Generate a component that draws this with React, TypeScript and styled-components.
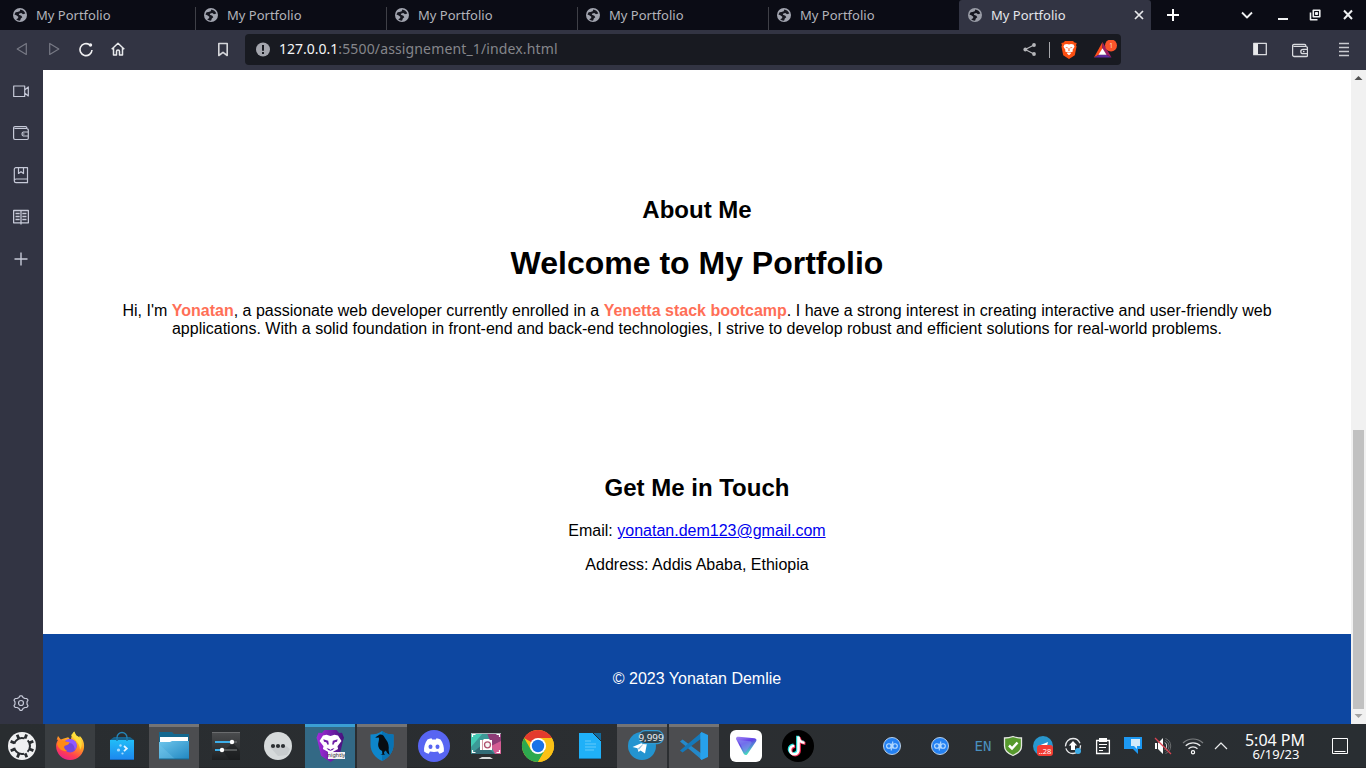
import React from "react";
import styled, { createGlobalStyle } from "styled-components";

const GlobalStyle = createGlobalStyle`
  * { box-sizing: border-box; }
  html, body { margin: 0; padding: 0; overflow: hidden; }
  svg { display: block; flex: none; }
`;

const ui = `"Noto Sans", sans-serif`;

const Screen = styled.div`
  width: 1366px;
  height: 768px;
  display: flex;
  flex-direction: column;
  overflow: hidden;
  font-family: ${ui};
`;

/* ---------- tab strip ---------- */
const TabStrip = styled.div`
  height: 30px;
  flex: none;
  display: flex;
  padding-left: 4px;
  background: #0b0c15;
`;
const Tab = styled.div<{ $active?: boolean; $divider?: boolean }>`
  width: ${(p) => (p.$active ? 192 : 191)}px;
  height: 30px;
  display: flex;
  align-items: center;
  padding: 0 5px 0 8px;
  font-size: 13px;
  color: ${(p) => (p.$active ? "#e4e5ea" : "#b3b4bb")};
  background: ${(p) =>
    p.$active
      ? "#323443"
      : p.$divider
        ? "linear-gradient(#3f4047, #3f4047) left bottom / 1px 23px no-repeat"
        : "none"};
  border-radius: ${(p) => (p.$active ? "3px 3px 0 0" : "0")};
`;
const TabTitle = styled.span`
  flex: 1;
  margin-left: 8px;
  line-height: 18px;
`;
const WindowButtons = styled.div`
  flex: 1;
  display: flex;
  justify-content: space-between;
  align-items: center;
  padding: 0 10px 0 14px;
`;
const ButtonGroup = styled.div`
  display: flex;
  align-items: center;
  gap: 18px;
`;

/* ---------- toolbar ---------- */
const Toolbar = styled.div`
  height: 40px;
  flex: none;
  display: flex;
  align-items: center;
  background: #323443;
  padding: 0 14px;
`;
const NavButtons = styled.div`
  display: flex;
  gap: 16px;
  width: 201px;
  padding-bottom: 2px;
`;
const AddressBar = styled.div`
  width: 876px;
  height: 31px;
  margin: 0 0 1px 14px;
  border-radius: 4px;
  background: #181a21;
  display: flex;
  align-items: center;
  padding: 0 4px 0 10px;
`;
const Url = styled.span`
  flex: 1;
  margin: -2px 0 0 8px;
  font-size: 14px;
  line-height: 20px;
  letter-spacing: 0.14px;
  color: #85868b;
`;
const Host = styled.span`
  color: #f4f4f6;
  letter-spacing: 0;
`;
const BarDivider = styled.span`
  width: 1px;
  height: 16px;
  background: #a6a7ab;
  margin: 0 10px 0 11px;
`;
const ToolbarRight = styled.div`
  flex: 1;
  display: flex;
  justify-content: flex-end;
  align-items: center;
`;
const Spaced = styled.span<{ $left: number }>`
  margin-left: ${(p) => p.$left}px;
`;

/* ---------- browser body ---------- */
const Body = styled.div`
  height: 654px;
  flex: none;
  display: flex;
`;
const SideBar = styled.aside`
  width: 43px;
  background: #323443;
  display: flex;
  flex-direction: column;
  align-items: center;
  justify-content: space-between;
  padding: 11px 1px 11px 0;
`;
const SideGroup = styled.div`
  display: flex;
  flex-direction: column;
  gap: 22px;
`;
const Page = styled.main`
  width: 1308px;
  display: flex;
  flex-direction: column;
  background: #fff;
  color: #000;
  font-family: "Liberation Sans", Arial, sans-serif;
  font-size: 16px;
  text-align: center;
`;
const About = styled.section`
  height: 404px;
  padding: 126px 64px 0;
`;
const Contact = styled.section`
  height: 160px;
`;
const SectionTitle = styled.h2`
  font-size: 24px;
  line-height: 27px;
  margin: 0;
`;
const PageTitle = styled.h1`
  font-size: 32px;
  line-height: 36px;
  margin: 22px 0 21px;
`;
const Paragraph = styled.p`
  margin: 0;
  line-height: 18px;
`;
const ContactLine = styled(Paragraph)`
  margin-top: 16px;
  &:first-of-type {
    margin-top: 21px;
  }
`;
const Accent = styled.strong`
  color: #ff6f57;
`;
const MailLink = styled.a`
  color: #0000ee;
`;
const Footer = styled.footer`
  height: 90px;
  background: #0d47a1;
  color: #fff;
  display: flex;
  align-items: center;
  justify-content: center;
`;
const ScrollBar = styled.div`
  width: 15px;
  background: #f1f1f1;
  display: flex;
  flex-direction: column;
  align-items: center;
  justify-content: space-between;
`;
const ScrollTrack = styled.div`
  flex: 1;
  width: 11px;
  display: flex;
  flex-direction: column;
  justify-content: flex-end;
`;
const ScrollThumb = styled.div`
  height: 279px;
  background: #c1c1c1;
`;

/* ---------- desktop panel ---------- */
const Panel = styled.div`
  height: 44px;
  flex: none;
  display: flex;
  background: linear-gradient(90deg, #292d30, #2b2e31 50%, #292e32);
  border-bottom: 1px solid #25272a;
`;
const Tasks = styled.div`
  display: flex;
  gap: 2px;
  margin-left: 1px;
  width: 835px;
`;
type TaskState = "idle" | "hover" | "open" | "focused";
const taskFill: Record<TaskState, string> = {
  idle: "transparent",
  hover: "#3a3e41",
  open: "linear-gradient(#747476 3px, #4c4d50 3px)",
  focused: "linear-gradient(#3b9fd3 3px, #336985 3px)",
};
const Task = styled.div<{ $state: TaskState }>`
  width: 50px;
  height: 44px;
  background: ${(p) => taskFill[p.$state]};
`;
const Tray = styled.div`
  display: flex;
  align-items: center;
  flex: 1;
`;
const TrayItem = styled.div<{ $w: number }>`
  width: ${(p) => p.$w}px;
  height: 44px;
  flex: none;
  display: flex;
  align-items: center;
  justify-content: center;
`;
const Language = styled.span`
  font-size: 14px;
  font-family: "DejaVu Sans Mono", monospace;
  color: #4a90bf;
`;
const Clock = styled.div`
  width: 98px;
  text-align: center;
  color: #fcfcfc;
`;
const Time = styled.div`
  font-size: 16px;
  line-height: 17px;
`;
const DateText = styled.div`
  padding-left: 2px;
  font-size: 13px;
  line-height: 11px;
`;

/* ---------- icons ---------- */
const Globe = ({ c }: { c: string }) => (
  <svg width="16" height="16" viewBox="0 0 16 16">
    <circle cx="8" cy="8" r="7" fill={c} />
    <path
      d="M8.300 2.400c2.300.2 4.300 1.800 5 4L11 7.200 9.300 6.100 7.400 6.500l-.6 1.300 2.600.9.9 1.500-1.500 1.400-.6 2c-1.500.2-3-.3-4-1.400l1.900-.9.200-1.600L4.300 8.200 2.400 7.500 3.600 5.200 5.500 5l2.200-.8z"
      fill="#15161f"
    />
  </svg>
);

const Stroke = ({
  d,
  w = 16,
  h = 16,
  c = "#d5d6dc",
  sw = 1.4,
  children,
}: {
  d?: string;
  w?: number;
  h?: number;
  c?: string;
  sw?: number;
  children?: React.ReactNode;
}) => (
  <svg width={w} height={h} viewBox={`0 0 ${w} ${h}`} fill="none" stroke={c} strokeWidth={sw} strokeLinejoin="round">
    {d && <path d={d} />}
    {children}
  </svg>
);

const BraveShield = () => (
  <svg width="18" height="20" viewBox="0 0 18 20">
    <path d="m5 1h8l1.500 1.500L16.700 3 16 5.200l.6 1-1.800 9L9 19l-5.800-3.800-1.800-9 .6-1L1.300 3l2.200-.5z" fill="#fb4f12" />
    <path d="m4.500 4.500 2.500-.4L9 4.600l2-.5 2.500.4 1 2.200-1.900 3.100.2 1.700-2.400 1.100.6.900-2 1.700-2-1.700.6-.900-2.400-1.100.2-1.700L3.500 6.700z" fill="#fff" />
    <path d="m5.300 6.900 2.500.7-.5 1zM12.700 6.900l-2.500.7.5 1zM8.600 8h.8l.2 2.800-.6.5-.6-.5zM7 11.800l2 .8 2-.8-.8 1H7.800z" fill="#fb4f12" />
  </svg>
);

const BatTriangle = () => (
  <svg width="24" height="20" viewBox="0 0 24 20">
    <path d="M9.500 2 1 17.500l5.300-3L9.500 9z" fill="#ff4d1c" />
    <path d="M1 17.500h17.500l-5.300-3H6.300z" fill="#5e2a9c" />
    <path d="M9.500 2v7l3.700 5.500 5.300 3z" fill="#9e1f63" />
    <path d="m9.500 8.200 4 6.600h-8z" fill="#fff" />
    <circle cx="18" cy="5.500" r="6" fill="#fb542b" />
    <text x="18" y="7.700" fontSize="6.500" fill="#ffd9ce" textAnchor="middle" fontFamily="Noto Sans, sans-serif">1</text>
  </svg>
);

const KubuntuIcon = () => (
  <svg width="44" height="44" viewBox="0 0 44 44">
    <circle cx="22" cy="22" r="14" fill="#eff0f1" />
    <circle cx="22" cy="22" r="8" fill="none" stroke="#292d30" strokeWidth="2" strokeDasharray="12.750 4" transform="rotate(-45 22 22)" />
    <g stroke="#292d30" strokeWidth="2.800">
      {[22, 67, 112, 157, 202, 247, 292, 337].map((a) => (
        <path key={a} d="M22 14V9.700" transform={`rotate(${a} 22 22)`} />
      ))}
    </g>
  </svg>
);

const FirefoxIcon = () => (
  <svg width="50" height="44" viewBox="0 0 50 44">
    <defs>
      <linearGradient id="ff" x1=".8" y1="0" x2=".3" y2="1">
        <stop offset="0" stopColor="#fff04a" />
        <stop offset=".42" stopColor="#ff9e20" />
        <stop offset=".75" stopColor="#ff4050" />
        <stop offset="1" stopColor="#e8208a" />
      </linearGradient>
    </defs>
    <path d="M11.700 15.800 13 12l2.800 3.500 3-1 4.400-1.300 2.600 3 1-5 2.400-3.700 2 3.900 3.200 2 .3-1.600c3.300 3.200 4.400 6.400 4.400 10.200a14 14 0 0 1-28 0c0-2.400.8-4.400 2-6.200z" fill="url(#ff)" />
    <circle cx="25.200" cy="21.800" r="6.600" fill="#7446dd" />
    <path d="M20 17c4-3.600 9-1.700 11 1.400 1.500 3 .3 5.800-1.300 7.500 0-4-2-7-5.400-7z" fill="#9059ff" />
    <path d="M12 19.500c2.200-3.500 6-3.800 8.500-2l4 .7c-.2 2.400-2.700 2.800-4.600 3.600-1.700 1.200-.4 4 2.500 5.300-5.600.8-9.400-2.800-10.400-7.600z" fill="#ff8a16" />
    <path d="M26 11.200 29.100 7.400l2 3.900 3.200 2c3.400 5 3 9 .7 12.800-.2-6-2.600-8.400-9-14.900z" fill="#ffe13c" opacity=".85" />
  </svg>
);

const DiscoverIcon = () => (
  <svg width="50" height="44" viewBox="0 0 50 44">
    <path d="m13 16 4-3h16l4 3v4H13z" fill="#17648f" />
    <path d="M20 19v-5.500a5 5 0 0 1 10 0V19" fill="none" stroke="#2586b8" strokeWidth="1.300" />
    <defs>
      <linearGradient id="bag" x1="0" y1="0" x2="0" y2="1">
        <stop stopColor="#21bdf8" />
        <stop offset="1" stopColor="#1d86ee" />
      </linearGradient>
    </defs>
    <path d="M13 16h24v20H13z" fill="url(#bag)" />
    <path d="M13 35h24v1H13z" fill="#1668bc" />
    <path d="M20 14v3M30 14v3" stroke="#1c6f9d" strokeWidth="1.400" />
    <path d="m27 22 2.800 2.600-2.800 2.600" stroke="#e7f5ff" strokeWidth="1.800" fill="none" />
    <g fill="#a8dcff">
      <circle cx="23.500" cy="21.500" r="1.200" />
      <circle cx="21.500" cy="26" r="1.600" />
      <circle cx="25.500" cy="29.500" r="1.100" />
    </g>
  </svg>
);

const FolderIcon = () => (
  <svg width="50" height="44" viewBox="0 0 50 44">
    <defs>
      <linearGradient id="fold" x1="0" y1="0" x2="1" y2="1">
        <stop stopColor="#6fc6ec" />
        <stop offset="1" stopColor="#2187c1" />
      </linearGradient>
    </defs>
    <path d="M10 8h13l2 2h15v11H10z" fill="#14688f" />
    <path d="M11 13h28v8H11z" fill="#fff" />
    <path d="M10 18h11l2-1h17v18H10z" fill="url(#fold)" />
    <path d="m10 20 16 15H10z" fill="#7dcdf0" opacity=".3" />
    <path d="M10 34.500h30v1H10z" fill="#176892" />
  </svg>
);

const SlidersIcon = () => (
  <svg width="50" height="44" viewBox="0 0 50 44">
    <defs>
      <linearGradient id="set" x1="0" y1="0" x2="0" y2="1">
        <stop stopColor="#4c4e50" />
        <stop offset="1" stopColor="#1e2022" />
      </linearGradient>
    </defs>
    <path d="M11 8h28v28H11z" fill="url(#set)" />
    <path d="m22 27 10-8 7 8v9H29z" fill="#17191b" opacity=".5" />
    <path d="M14 18h22M14 26h22" stroke="#65686a" strokeWidth="1.600" />
    <path d="M14 18h17M14 26h7" stroke="#3daee9" strokeWidth="1.800" />
    <circle cx="31" cy="18" r="2.200" fill="#fff" />
    <circle cx="21" cy="26" r="2.200" fill="#fff" />
    <path d="M11 8.500h28" stroke="#6a6c6e" />
  </svg>
);

const DotsIcon = () => (
  <svg width="50" height="44" viewBox="0 0 50 44">
    <circle cx="25" cy="22" r="14" fill="#d6dadb" />
    <path d="m17 23 8 9 9-1 3-6-4-3z" fill="#bec3c5" opacity=".6" />
    <g fill="#2c3033">
      <circle cx="20" cy="22" r="2.100" />
      <circle cx="25" cy="22" r="2.100" />
      <circle cx="30" cy="22" r="2.100" />
    </g>
  </svg>
);

const BraveNightlyIcon = () => (
  <svg width="50" height="44" viewBox="0 0 50 44">
    <defs>
      <linearGradient id="bn" x1="0" y1="0" x2="1" y2="0">
        <stop stopColor="#a42bdc" />
        <stop offset="1" stopColor="#44127c" />
      </linearGradient>
    </defs>
    <path d="M19.500 6h12l2.500 3 3-.3 2 5-1 3-3.500 15L25.500 38 16 31.700l-3.500-15-1-3 2-5 3.500.3z" fill="url(#bn)" />
    <path d="m18 11.500 3.500-.8 4 1.300 4-1.300 3.500.8 3.500 5.500-4 5.200.6 2.800-4.600 2.400-3 3.100-3-3.100-4.600-2.400.6-2.800-4-5.200z" fill="#fff" />
    <path d="m18.300 15.300 4.900 1.500.6 3.400-1 .8-1.600-2.700-2.200-.5zM32.700 15.300l-4.900 1.500-.6 3.400 1 .8 1.600-2.700 2.200-.5zM21.500 24l2.900.9 1.100 1 1.100-1 2.900-.9-1.700 1.900-2.300.9-2.300-.9z" fill="#6e1fa7" />
    <path d="M23 28h17v7H23z" fill="#f3f1f4" />
    <text x="31.500" y="33.400" fontSize="5.500" textAnchor="middle" fontFamily="Noto Sans, sans-serif" fill="#333">nightly</text>
  </svg>
);

const RavenIcon = () => (
  <svg width="50" height="44" viewBox="0 0 50 44">
    <path d="M25 7c3 2.500 7 3.500 11.500 3.500V21c0 7-5 13-11.500 16-6.500-3-11.500-9-11.500-16V10.500C18 10.500 22 9.500 25 7z" fill="#0e86cb" />
    <path d="M25 7c3 2.500 7 3.500 11.500 3.500V21c0 7-5 13-11.500 16z" fill="#0873b5" />
    <path d="M18.300 13.800c1-1.200 1.700-1.500 2.700-2 1-1.300 3.500-1.800 5.300-.3 1.200 1.200 1.400 2.600 2.800 4.300 2.400 3 3 6.700 2.500 10.500l.9 4.700-2.200-2-1.500-2.500-1.800 1.500.2 2 1 .8h-4.700l1.900-.9-.3-3c-3.300-1.500-4.600-5-3.600-8.600.5-2 .7-3.400.2-4.700z" fill="#080d12" />
  </svg>
);

const DiscordIcon = () => (
  <svg width="50" height="44" viewBox="0 0 50 44">
    <circle cx="25" cy="22" r="16" fill="#5865f2" />
    <path d="M18.500 15.500c1.300-.7 2.600-1.100 4-1.300l.7 1.300h3.600l.7-1.300c1.400.2 2.700.6 4 1.300 2.600 3.800 3.800 7.700 3.400 12-1.500 1.200-3 1.900-4.600 2.300l-1.300-2.300c-2.600.6-5.400.6-8 0l-1.300 2.300c-1.600-.4-3.100-1.100-4.600-2.300-.4-4.300.8-8.200 3.400-12z" fill="#fff" />
    <ellipse cx="21.500" cy="22.800" rx="2" ry="2.300" fill="#5865f2" />
    <ellipse cx="28.500" cy="22.800" rx="2" ry="2.300" fill="#5865f2" />
  </svg>
);

const SpectacleIcon = () => (
  <svg width="50" height="44" viewBox="0 0 50 44">
    <path d="M10 9h30v21H10z" fill="#3c9997" />
    <path d="M26 9h14v21h-6z" fill="#8d3c77" />
    <path d="M10 9h12L10 23z" fill="#43cbb5" />
    <path d="M10 30 22 20l12 10z" fill="#336c77" />
    <path d="M34 30 30 22l10-5v13z" fill="#d35c93" />
    <path d="M11.500 13v-2.500h3M35.500 10.500h3V13M11.500 26v2.500h3M35.500 28.500h3V26" fill="none" stroke="#fff" strokeWidth="1.200" />
    <path d="M10 9.500h30" stroke="#a9b5b8" />
    <path d="M19 16h3l1-1h5l1 1h2v10H19z" fill="#fff" />
    <path d="M21.500 16v10" stroke="#c9808f" strokeWidth=".8" />
    <circle cx="26.500" cy="20.800" r="3" fill="#f6f6f6" stroke="#b0506e" strokeWidth="1.300" />
    <path d="M21 33h8l3 2H17.500z" fill="#d8dadb" />
  </svg>
);

const ChromeIcon = () => (
  <svg width="50" height="44" viewBox="0 0 50 44">
    <circle cx="25" cy="22" r="16" fill="#fbc116" />
    <path d="M25 22 11.140 14a16 16 0 0 1 27.720 0z" fill="#e33b2e" />
    <path d="M11.140 14a16 16 0 0 0 13.860 24L32 26l-14 0z" fill="#2da94f" />
    <path d="M25 14h13.860A16 16 0 0 1 25 38l7-12z" fill="#fbc116" />
    <circle cx="25" cy="22" r="8" fill="#fff" />
    <circle cx="25" cy="22" r="6.200" fill="#1a73e8" />
  </svg>
);

const WriterIcon = () => (
  <svg width="50" height="44" viewBox="0 0 50 44">
    <path d="M14 9h15l7 7v19H14z" fill="#1fb0f8" />
    <path d="M28 9h8v8z" fill="#146a9b" />
    <path d="m28 9 8 8" stroke="#222b31" />
    <path d="M20 17h6M20 20h11M20 23h11M20 26h9" stroke="#65c9fa" strokeWidth="1.200" />
    <path d="M14 34.500h22" stroke="#1878ae" />
  </svg>
);

const TelegramTaskIcon = () => (
  <svg width="50" height="44" viewBox="0 0 50 44">
    <circle cx="25" cy="22" r="14" fill="#2394d0" />
    <path d="m15.500 23 15-6.500-2.500 13-4.500-3-2 1.500-1-3.700z" fill="#fff" />
    <path d="m20.500 24.800 7-6-5.500 7z" fill="#8fc0dd" />
    <rect x="21.500" y="6.700" width="25" height="13" rx="6.500" fill="#314550" stroke="#329bd4" strokeWidth="1.200" />
    <text x="34" y="17" textAnchor="middle" fontSize="9.800" fill="#f2f2f2" fontFamily="Noto Sans, sans-serif">9,999</text>
  </svg>
);

const CodeIcon = () => (
  <svg width="50" height="44" viewBox="0 0 50 44">
    <path d="m11 17.500 2.600-2.100L33 30v6z" fill="#2489ca" />
    <path d="m11 26.500 2.600 2.100L33 14V8z" fill="#1479bb" />
    <path d="M32.500 8 39 11v22l-6.500 3-1.200-1.500v-25z" fill="#27a1ec" />
  </svg>
);

const ProtonIcon = () => (
  <svg width="50" height="44" viewBox="0 0 50 44">
    <defs>
      <linearGradient id="pv" x1="0" y1="0" x2=".5" y2="1">
        <stop stopColor="#a68cf5" />
        <stop offset=".45" stopColor="#5f40e6" />
        <stop offset="1" stopColor="#45e5bd" />
      </linearGradient>
    </defs>
    <rect x="9" y="6" width="32" height="32" rx="6" fill="#fff" />
    <path d="M15 15c0-2 1-2.500 3-2.300l15.500 1.600c2 .3 2.500 1.700 1.500 3.200l-8.500 12.400c-1.200 1.700-3 1.500-3.900-.3z" fill="url(#pv)" />
    <path d="m17 16 12 1.300c1.600.2 2 1.300 1.200 2.600L24 29z" fill="#7f8df0" opacity=".6" />
  </svg>
);

const notePath = "M25.500 12.500v13.500a4.200 4.200 0 1 1-4.200-4.200M25.500 13c.3 3.500 2.800 5.500 6 5.700";
const TikTokIcon = () => (
  <svg width="50" height="44" viewBox="0 0 50 44">
    <circle cx="25" cy="22" r="16" fill="#000" />
    <g fill="none" strokeWidth="3">
      <path d={notePath} stroke="#25e4df" transform="translate(-.9 -.7)" />
      <path d={notePath} stroke="#ee2950" transform="translate(.9 .7)" />
      <path d={notePath} stroke="#fff" strokeWidth="2.600" />
    </g>
  </svg>
);

const QbIcon = () => (
  <svg width="20" height="20" viewBox="0 0 20 20">
    <circle cx="10" cy="10" r="8.500" fill="#2481f2" stroke="#b8cfe8" />
    <g fill="none" stroke="#b8dcff" strokeWidth="1.100">
      <circle cx="6.900" cy="10" r="2.300" />
      <circle cx="13" cy="10" r="2.300" />
      <path d="M9.300 7.500V14.500M10.700 5.500v7" />
    </g>
  </svg>
);

const tasks: { name: string; state: TaskState; icon: React.ReactNode }[] = [
  { name: "firefox", state: "hover", icon: <FirefoxIcon /> },
  { name: "discover", state: "idle", icon: <DiscoverIcon /> },
  { name: "files", state: "open", icon: <FolderIcon /> },
  { name: "settings", state: "idle", icon: <SlidersIcon /> },
  { name: "launcher", state: "idle", icon: <DotsIcon /> },
  { name: "brave", state: "focused", icon: <BraveNightlyIcon /> },
  { name: "raven", state: "open", icon: <RavenIcon /> },
  { name: "discord", state: "idle", icon: <DiscordIcon /> },
  { name: "spectacle", state: "idle", icon: <SpectacleIcon /> },
  { name: "chrome", state: "idle", icon: <ChromeIcon /> },
  { name: "writer", state: "idle", icon: <WriterIcon /> },
  { name: "telegram", state: "open", icon: <TelegramTaskIcon /> },
  { name: "code", state: "open", icon: <CodeIcon /> },
  { name: "vpn", state: "idle", icon: <ProtonIcon /> },
  { name: "tiktok", state: "idle", icon: <TikTokIcon /> },
];

const side = "#c6c9d8";

const Wallet = ({ c, sw }: { c: string; sw: number }) => (
  <Stroke w={16} h={16} c={c} sw={sw} d="M1.500 4.400h12a2 2 0 0 1 2 2v6.900a1.200 1.200 0 0 1-1.200 1.200H2A1.500 1.500 0 0 1 .6 13V3.700A1.500 1.500 0 0 1 2 2.300h10.500a1.300 1.300 0 0 1 1.300 1.300v.8M15.400 7.300H11a2.200 2.200 0 0 0 0 4.400h4.400M11 9.500h1.500" />
);

export default function App() {
  return (
    <Screen>
      <GlobalStyle />
      <TabStrip>
        {[0, 1, 2, 3, 4].map((i) => (
          <Tab key={i} $divider={i > 0}>
            <Globe c="#a2a5b0" />
            <TabTitle>My Portfolio</TabTitle>
          </Tab>
        ))}
        <Tab $active>
          <Globe c="#9a9da7" />
          <TabTitle>My Portfolio</TabTitle>
          <Stroke w={14} h={14} c="#e8e9ec" sw={1.7} d="m3 3 8 8M11 3l-8 8" />
        </Tab>
        <WindowButtons>
          <Stroke w={16} h={16} c="#fff" sw={2} d="M8 2v12M2 8h12" />
          <ButtonGroup>
            <Stroke c="#eff0f1" sw={1.8} d="m4 5.500 5 5 5-5" />
            <Stroke w={18} c="#eff0f1" sw={2} d="M6 12h10" />
            <Stroke w={14} c="#eff0f1" sw={1.6} d="M5.300 3.300h6.500v6.500H5.300zM7.800 5.800h1.500v1.500H7.800zM2.500 5.500v7.200h7" />
            <Stroke c="#eff0f1" sw={2} d="m4 3.500 8 8.500M12 3.500l-8 8.500" />
          </ButtonGroup>
        </WindowButtons>
      </TabStrip>

      <Toolbar>
        <NavButtons>
          <Stroke c="#777985" sw={1.2} d="M12.300 2.500v11L3.200 8z" />
          <Stroke c="#777985" sw={1.2} d="M3.700 2.500v11L12.800 8z" />
          <Stroke c="#efeff1" sw={1.6} d="M11.600 3.800A6 6 0 1 0 14 9">
            <circle cx="12.500" cy="4" r="1.700" fill="#efeff1" stroke="none" />
          </Stroke>
          <Stroke c="#e8e9ec" sw={1.5} d="M1.700 8.300 8 2.300l6.300 6M3.500 7v7h3v-3.500a1.500 1.500 0 0 1 3 0V14h3V7" />
        </NavButtons>
        <Stroke c="#d5d6da" sw={1.6} d="M3.800 1.500h8.400v12L8 10.300 3.800 13.500z" />
        <AddressBar>
          <svg width="16" height="16" viewBox="0 0 16 16">
            <circle cx="8" cy="7.500" r="7" fill="#a3a5ad" />
            <path d="M8 3v5.700M8 10v2" stroke="#181a21" strokeWidth="2" />
          </svg>
          <Url>
            <Host>127.0.0.1</Host>:5500/assignement_1/index.html
          </Url>
          <Stroke c="#b6b7bb" sw={1.2} d="M3.200 7.500 12 3M3.200 7.500l8.800 4.500">
            <circle cx="3.300" cy="7.500" r="1.900" fill="#b6b7bb" stroke="none" />
            <circle cx="12" cy="3" r="1.900" fill="#b6b7bb" stroke="none" />
            <circle cx="12" cy="12" r="1.900" fill="#b6b7bb" stroke="none" />
          </Stroke>
          <BarDivider />
          <BraveShield />
          <Spaced $left={15}>
            <BatTriangle />
          </Spaced>
        </AddressBar>
        <ToolbarRight>
          <Stroke c="#d9dade" sw={1.3} d="M1.700 1.300h12.600v11.400H1.700z">
            <path d="M2 1.500h4v11H2z" fill="#e9e9eb" stroke="none" />
          </Stroke>
          <Spaced $left={24}>
            <Wallet c="#d9dade" sw={1.3} />
          </Spaced>
          <Spaced $left={28}>
            <Stroke c="#c9cad0" sw={1.3} d="M3 1.500h10M3 5.500h10M3 9.500h10M3 13.500h10" />
          </Spaced>
        </ToolbarRight>
      </Toolbar>

      <Body>
        <SideBar>
          <SideGroup>
            <Stroke c={side} sw={1.2} h={20} d="M.7 5h11v10.500H.7zM11.700 9l3.600-3v9l-3.600-3" />
            <Stroke c={side} sw={1.2} h={20} d="M1.500 5.500h12a1.800 1.800 0 0 1 1.800 1.800v8a1.200 1.200 0 0 1-1.200 1.200H2a1.400 1.400 0 0 1-1.400-1.400V5A1.400 1.400 0 0 1 2 3.600h10.500A1.300 1.300 0 0 1 13.800 5M15.300 9h-5a2.200 2.200 0 0 0 0 4h5M10 11h1.500" />
            <Stroke c={side} sw={1.2} h={20} d="M3 2.700h11.500v15H3a1.800 1.800 0 0 1-1.700-1.700V4.300A1.600 1.600 0 0 1 3 2.700zM1.400 15.500A1.800 1.800 0 0 1 3 14h11.500M5.500 3v5.500L8 6.700l2.500 1.800V3" />
            <Stroke c={side} sw={1.3} h={20} d="M.6 3.500h14.800v12.300H.6zM8 3.500v14M2.500 6.500h4.200M2.500 9.500h4.200M2.500 12.500h4.200M9.300 6.500h4.200M9.300 9.500h4.200M9.300 12.500h4.200" />
            <Stroke c={side} sw={1.4} h={20} d="M8 3.500v13M1.500 10h13" />
          </SideGroup>
          <Stroke c={side} sw={1.2} w={18} h={20} d="M7 4.400 8 2.800h2l1 1.600 1.900 1.100 1.900 0 1.200 1.700-1 1.700v2.200l1 1.700-1.200 1.700h-1.900L11 15.600l-1 1.700H8l-1-1.700-1.900-1.100H3.200L2 12.800l1-1.700V8.900L2 7.200l1.200-1.700h1.900z">
            <circle cx="9" cy="10" r="2.500" />
          </Stroke>
        </SideBar>
        <Page>
          <About>
            <SectionTitle>About Me</SectionTitle>
            <PageTitle>Welcome to My Portfolio</PageTitle>
            <Paragraph>
              Hi, I'm <Accent>Yonatan</Accent>, a passionate web developer currently enrolled in a{" "}
              <Accent>Yenetta stack bootcamp</Accent>. I have a strong interest in creating interactive and
              user-friendly web applications. With a solid foundation in front-end and back-end technologies, I strive
              to develop robust and efficient solutions for real-world problems.
            </Paragraph>
          </About>
          <Contact>
            <SectionTitle>Get Me in Touch</SectionTitle>
            <ContactLine>
              Email: <MailLink href="mailto:yonatan.dem123@gmail.com">yonatan.dem123@gmail.com</MailLink>
            </ContactLine>
            <ContactLine>Address: Addis Ababa, Ethiopia</ContactLine>
          </Contact>
          <Footer>
            <Paragraph>© 2023 Yonatan Demlie</Paragraph>
          </Footer>
        </Page>
        <ScrollBar>
          <svg width="15" height="15" viewBox="0 0 15 15">
            <path d="M3.500 10 7.500 6l4 4z" fill="#505050" />
          </svg>
          <ScrollTrack>
            <ScrollThumb />
          </ScrollTrack>
          <svg width="15" height="15" viewBox="0 0 15 15">
            <path d="M3.500 5 7.500 9l4-4z" fill="#a3a3a3" />
          </svg>
        </ScrollBar>
      </Body>

      <Panel>
        <KubuntuIcon />
        <Tasks>
          {tasks.map((t) => (
            <Task key={t.name} $state={t.state}>
              {t.icon}
            </Task>
          ))}
        </Tasks>
        <Tray>
          <TrayItem $w={24}>
            <QbIcon />
          </TrayItem>
          <TrayItem $w={72}>
            <QbIcon />
          </TrayItem>
          <TrayItem $w={14}>
            <Language>EN</Language>
          </TrayItem>
          <TrayItem $w={46}>
            <svg width="20" height="22" viewBox="0 0 20 22">
              <path d="M10 1.500c2.500 1 5.500 1.500 8.500 1.500v8c0 4-3.500 7.500-8.500 9.500-5-2-8.500-5.500-8.500-9.500V3c3 0 6-.5 8.500-1.500z" fill="#56992d" stroke="#e5e8e1" strokeWidth="1.300" />
              <path d="m6 10.500 3 3 5.500-6" fill="none" stroke="#fff" strokeWidth="2.500" />
            </svg>
          </TrayItem>
          <TrayItem $w={14}>
            <svg width="22" height="22" viewBox="0 0 22 22">
              <circle cx="11" cy="11" r="10" fill="#2997ce" />
              <path d="m6 11 10-4-1.500 6H9z" fill="#fff" />
              <rect x="5" y="10" width="16" height="11" rx="3" fill="#f23c34" />
              <text x="13" y="18.500" textAnchor="middle" fontSize="7.500" fill="#fff" fontFamily="Noto Sans, sans-serif">..28</text>
            </svg>
          </TrayItem>
          <TrayItem $w={46}>
            <svg width="18" height="18" viewBox="0 0 18 18">
              <circle cx="9" cy="9" r="7.500" fill="none" stroke="#e7e8e9" strokeWidth="1.300" strokeDasharray="21 2" />
              <path d="m9 4 4.200 4.500H11V13H7V8.500H4.800z" fill="#fff" />
              <circle cx="14" cy="14" r="3" fill="#3daee9" />
            </svg>
          </TrayItem>
          <TrayItem $w={14}>
            <svg width="18" height="18" viewBox="0 0 18 18">
              <path d="M2.600 3.500h12.800v13H2.600z" fill="none" stroke="#fcfcfc" strokeWidth="1.300" />
              <path d="M5 1h8v4H5z" fill="#fcfcfc" />
              <path d="M5 7.500h8M5 10.500h7M5 13.500h4" stroke="#fcfcfc" strokeWidth="1.200" />
            </svg>
          </TrayItem>
          <TrayItem $w={46}>
            <svg width="18" height="20" viewBox="0 0 18 20">
              <path d="M0 1h18v12h-4v5l-5-5H0z" fill="#1d99f3" />
              <path d="M7 3h9v7h-3v3l-3-3H7z" fill="#d2e9fa" />
            </svg>
          </TrayItem>
          <TrayItem $w={14}>
            <svg width="18" height="18" viewBox="0 0 18 18">
              <path d="M1 6h2v6H1zM4 6l5-5v16l-5-5z" fill="#fcfcfc" />
              <path d="M11 5.500a4.500 4.500 0 0 1 0 7" fill="none" stroke="#cfd0d1" />
              <path d="M11.500 1.500a8 8 0 0 1 0 15M11.500 3.500a6 6 0 0 1 0 11" fill="none" stroke="#686b6d" />
              <path d="m1 1 16 16" stroke="#da4453" strokeWidth="1.200" />
            </svg>
          </TrayItem>
          <TrayItem $w={46}>
            <svg width="22" height="18" viewBox="0 0 22 18" fill="none" strokeWidth="1.200">
              <path d="M1 6a14.500 14.500 0 0 1 20 0" stroke="#7b7e80" />
              <path d="M3.700 8.800a10.500 10.500 0 0 1 14.600 0M6.500 11.700a6.500 6.500 0 0 1 9 0" stroke="#e9eaeb" />
              <circle cx="11" cy="15.200" r="1.600" stroke="#fcfcfc" />
            </svg>
          </TrayItem>
          <TrayItem $w={10}>
            <Stroke c="#e9eaeb" sw={1.2} d="m2 11 6-6 6 6" />
          </TrayItem>
          <Clock>
            <Time>5:04 PM</Time>
            <DateText>6/19/23</DateText>
          </Clock>
          <TrayItem $w={32}>
            <Stroke c="#fcfcfc" sw={1} d="M.5.500h15v15H.5zM2.500 13.500h11" />
          </TrayItem>
        </Tray>
      </Panel>
    </Screen>
  );
}
